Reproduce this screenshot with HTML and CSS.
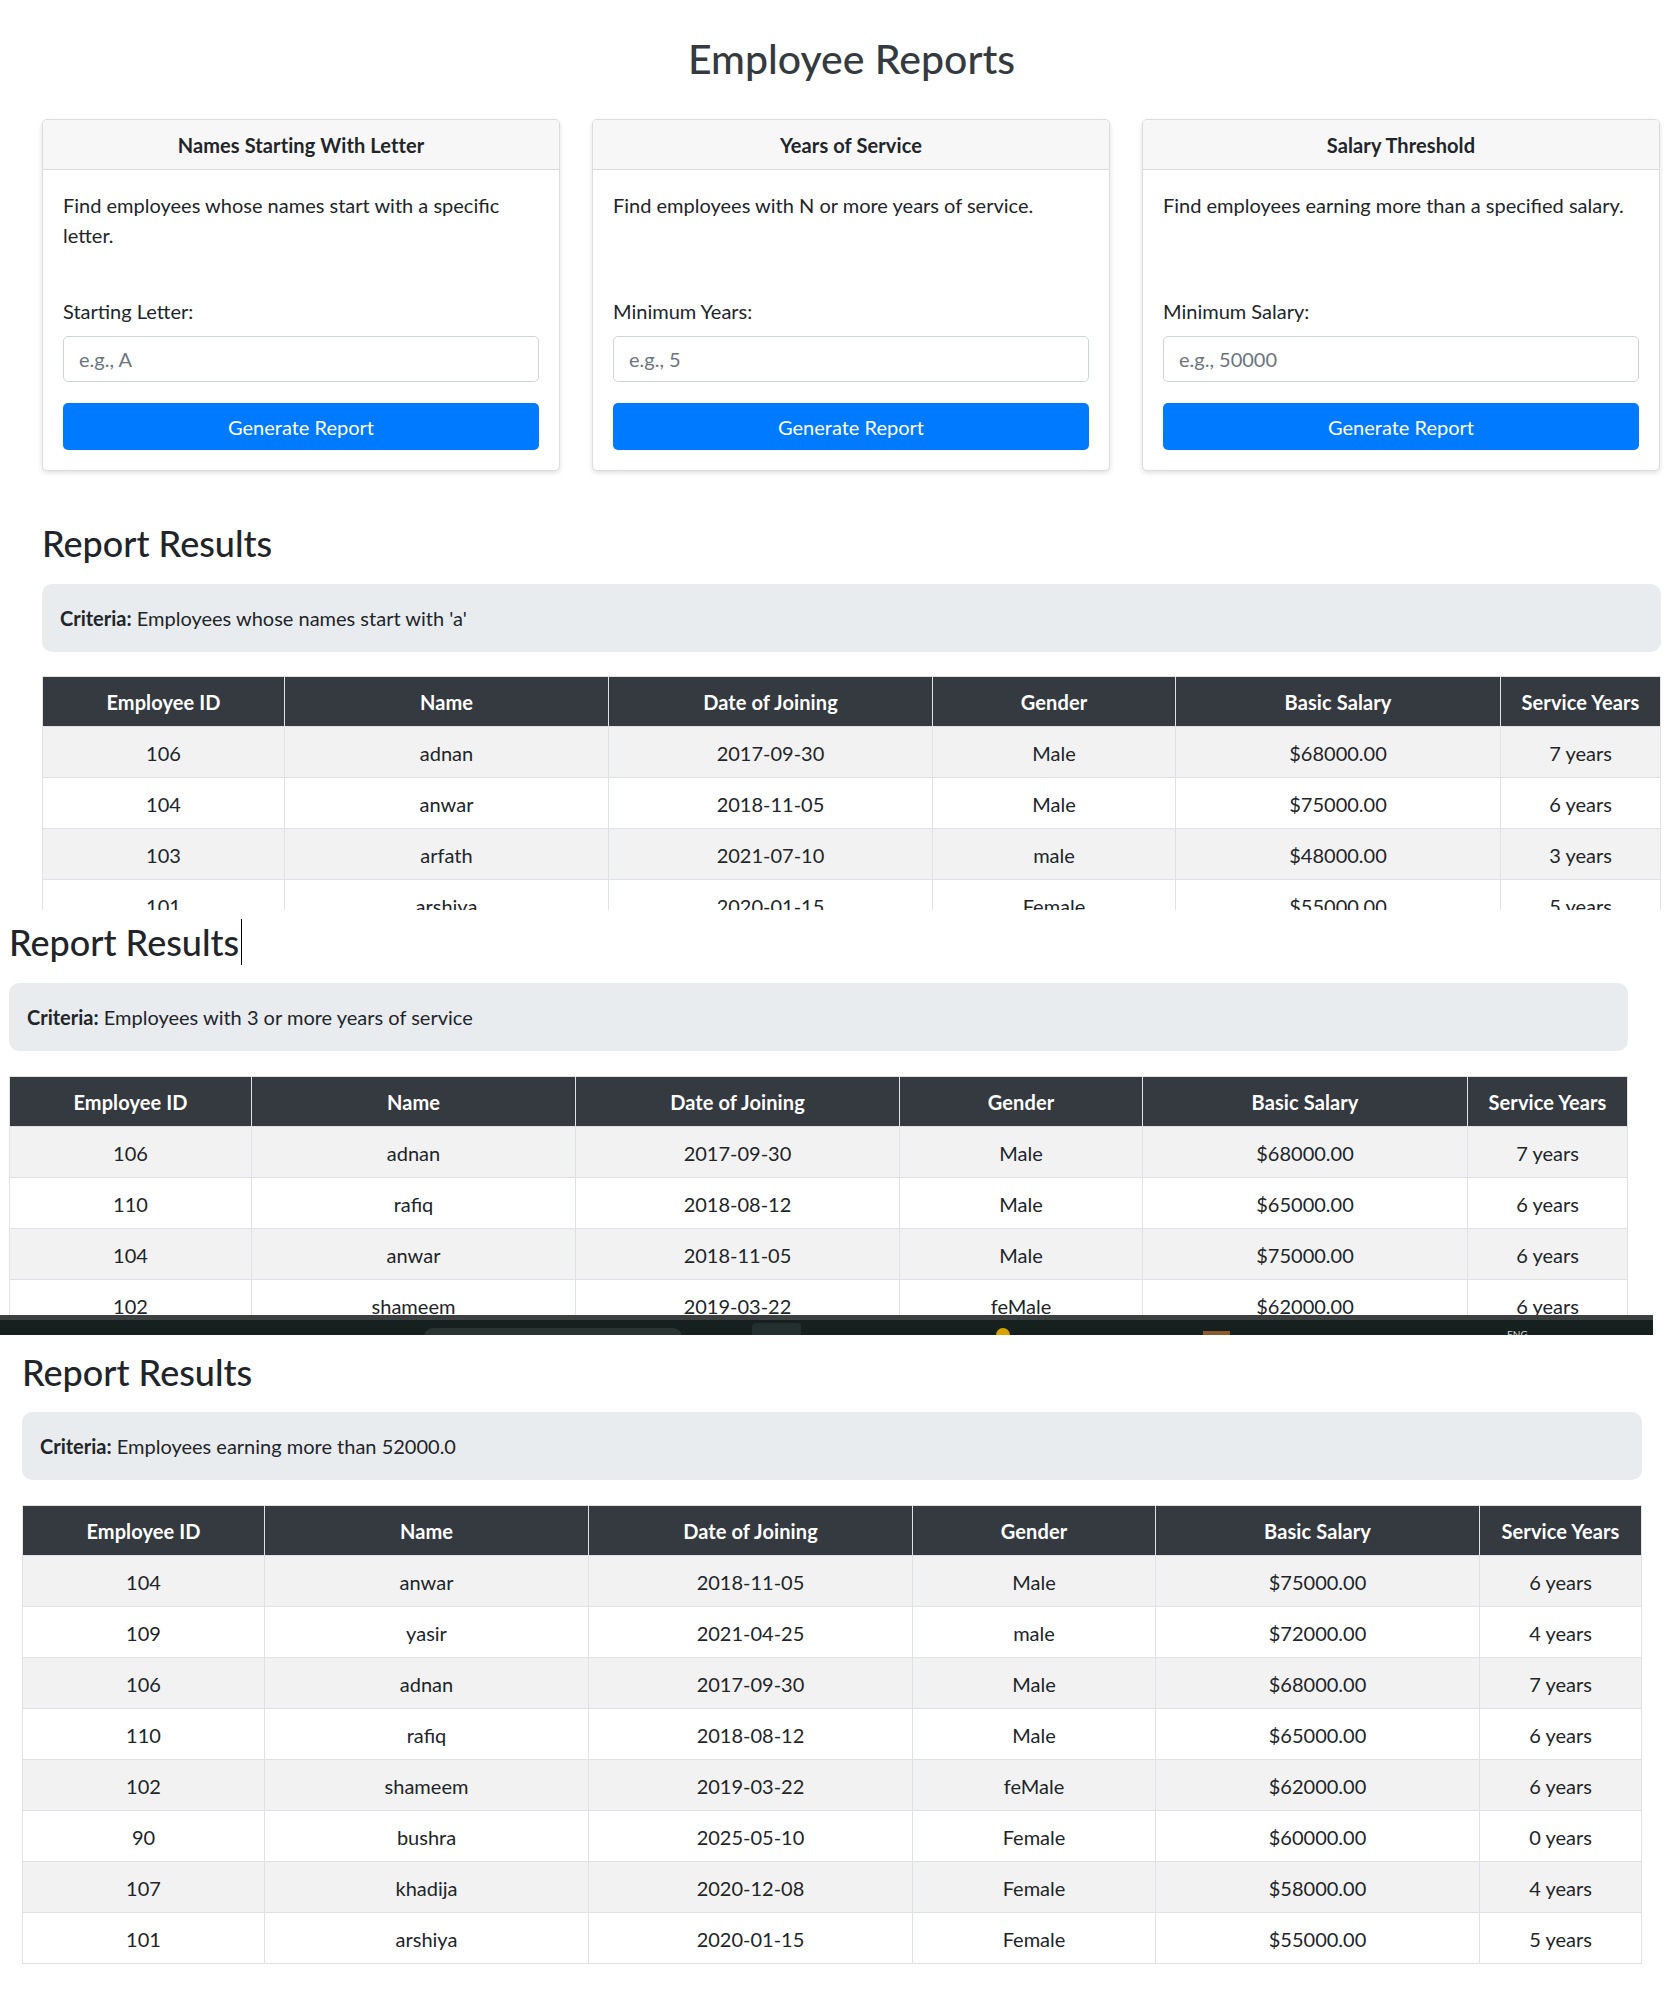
FILE: index.html
```html
<!DOCTYPE html>
<html lang="en">
<head>
<meta charset="utf-8">
<title>Employee Reports</title>
<link rel="stylesheet" href="styles.css">
</head>
<body>

<section class="shot shot-1">
  <div class="wrap">
    <h1 class="page-title">Employee Reports</h1>
    <div class="cards">
      <div class="card">
        <div class="card-header">Names Starting With Letter</div>
        <div class="card-body">
          <p class="desc">Find employees whose names start with a specific letter.</p>
          <label class="label">Starting Letter:</label>
          <div class="input"><span class="ph">e.g., A</span></div>
          <div class="btn">Generate Report</div>
        </div>
      </div>
      <div class="card">
        <div class="card-header">Years of Service</div>
        <div class="card-body">
          <p class="desc">Find employees with N or more years of service.</p>
          <label class="label">Minimum Years:</label>
          <div class="input"><span class="ph">e.g., 5</span></div>
          <div class="btn">Generate Report</div>
        </div>
      </div>
      <div class="card">
        <div class="card-header">Salary Threshold</div>
        <div class="card-body">
          <p class="desc">Find employees earning more than a specified salary.</p>
          <label class="label">Minimum Salary:</label>
          <div class="input"><span class="ph">e.g., 50000</span></div>
          <div class="btn">Generate Report</div>
        </div>
      </div>
    </div>

    <h3 class="results-title first">Report Results</h3>
    <div class="criteria crit-first"><b>Criteria:</b> Employees whose names start with 'a'</div>
    <table class="tbl tbl-first">
      <colgroup><col style="width:242px"><col style="width:324px"><col style="width:324px"><col style="width:243px"><col style="width:325px"><col></colgroup>
      <thead><tr><th>Employee ID</th><th>Name</th><th>Date of Joining</th><th>Gender</th><th>Basic Salary</th><th>Service Years</th></tr></thead>
      <tbody>
        <tr><td>106</td><td>adnan</td><td>2017-09-30</td><td>Male</td><td>$68000.00</td><td>7 years</td></tr>
        <tr><td>104</td><td>anwar</td><td>2018-11-05</td><td>Male</td><td>$75000.00</td><td>6 years</td></tr>
        <tr><td>103</td><td>arfath</td><td>2021-07-10</td><td>male</td><td>$48000.00</td><td>3 years</td></tr>
        <tr><td>101</td><td>arshiya</td><td>2020-01-15</td><td>Female</td><td>$55000.00</td><td>5 years</td></tr>
      </tbody>
    </table>
  </div>
</section>

<section class="shot shot-2">
  <div class="wrap">
    <h3 class="results-title second">Report Results<span class="caret"></span></h3>
    <div class="criteria"><b>Criteria:</b> Employees with 3 or more years of service</div>
    <table class="tbl">
      <colgroup><col style="width:242px"><col style="width:324px"><col style="width:324px"><col style="width:243px"><col style="width:325px"><col></colgroup>
      <thead><tr><th>Employee ID</th><th>Name</th><th>Date of Joining</th><th>Gender</th><th>Basic Salary</th><th>Service Years</th></tr></thead>
      <tbody>
        <tr><td>106</td><td>adnan</td><td>2017-09-30</td><td>Male</td><td>$68000.00</td><td>7 years</td></tr>
        <tr><td>110</td><td>rafiq</td><td>2018-08-12</td><td>Male</td><td>$65000.00</td><td>6 years</td></tr>
        <tr><td>104</td><td>anwar</td><td>2018-11-05</td><td>Male</td><td>$75000.00</td><td>6 years</td></tr>
        <tr><td>102</td><td>shameem</td><td>2019-03-22</td><td>feMale</td><td>$62000.00</td><td>6 years</td></tr>
      </tbody>
    </table>
  </div>
</section>

<div class="taskbar">
  <div class="tb-search"></div>
  <div class="tb-icon"></div>
  <div class="tb-dot"></div>
  <div class="tb-orange"></div>
  <div class="tb-text">ENG</div>
</div>

<section class="shot shot-3">
  <div class="wrap">
    <h3 class="results-title third">Report Results</h3>
    <div class="criteria crit-third"><b>Criteria:</b> Employees earning more than 52000.0</div>
    <table class="tbl">
      <colgroup><col style="width:242px"><col style="width:324px"><col style="width:324px"><col style="width:243px"><col style="width:324px"><col></colgroup>
      <thead><tr><th>Employee ID</th><th>Name</th><th>Date of Joining</th><th>Gender</th><th>Basic Salary</th><th>Service Years</th></tr></thead>
      <tbody>
        <tr><td>104</td><td>anwar</td><td>2018-11-05</td><td>Male</td><td>$75000.00</td><td>6 years</td></tr>
        <tr><td>109</td><td>yasir</td><td>2021-04-25</td><td>male</td><td>$72000.00</td><td>4 years</td></tr>
        <tr><td>106</td><td>adnan</td><td>2017-09-30</td><td>Male</td><td>$68000.00</td><td>7 years</td></tr>
        <tr><td>110</td><td>rafiq</td><td>2018-08-12</td><td>Male</td><td>$65000.00</td><td>6 years</td></tr>
        <tr><td>102</td><td>shameem</td><td>2019-03-22</td><td>feMale</td><td>$62000.00</td><td>6 years</td></tr>
        <tr><td>90</td><td>bushra</td><td>2025-05-10</td><td>Female</td><td>$60000.00</td><td>0 years</td></tr>
        <tr><td>107</td><td>khadija</td><td>2020-12-08</td><td>Female</td><td>$58000.00</td><td>4 years</td></tr>
        <tr><td>101</td><td>arshiya</td><td>2020-01-15</td><td>Female</td><td>$55000.00</td><td>5 years</td></tr>
      </tbody>
    </table>
  </div>
</section>

</body>
</html>
```

FILE: styles.css
```css
* { box-sizing: border-box; }

html, body {
  margin: 0;
  padding: 0;
  background: #fff;
}

body {
  font-family: Lato, "Noto Sans", "Liberation Sans", sans-serif;
  font-size: 20px;
  line-height: 30px;
  color: #212529;
}

.shot {
  overflow: hidden;
  position: relative;
}

.shot-1 { height: 910px; }
.shot-1 .wrap { margin-left: 42px; width: 1619px; }

.shot-2 { height: 405px; }
.shot-2 .wrap { margin-left: 9px; width: 1619px; }

.shot-3 { height: 668px; }
.shot-3 .wrap { margin-left: 22px; width: 1620px; }

.page-title {
  margin: 0;
  padding-top: 35px;
  font-size: 41px;
  line-height: 48px;
  font-weight: 500;
  text-align: center;
  color: #343a40;
}

.cards {
  margin-top: 36px;
  display: grid;
  grid-template-columns: 518px 518px 518px;
  column-gap: 32px;
}

.card {
  border: 1px solid #dcdcdc;
  border-radius: 5px;
  background: #fff;
  box-shadow: 0 2px 5px rgba(0, 0, 0, 0.12);
  overflow: hidden;
}

.card-header {
  background: #f7f7f7;
  border-bottom: 1px solid #d9d9d9;
  padding: 10px 20px 9px;
  font-weight: 700;
  letter-spacing: 0.1px;
  text-align: center;
}

.card-body {
  padding: 20px 20px 20px;
}

.desc {
  margin: 0 0 20px;
  min-height: 86px;
}

.label {
  display: block;
  margin-bottom: 10px;
}

.input {
  height: 46px;
  border: 1px solid #ced4da;
  border-radius: 5px;
  padding: 0 15px;
  display: flex;
  align-items: center;
}

.ph { color: #6c757d; }

.btn {
  margin-top: 21px;
  height: 47px;
  border-radius: 5px;
  background: #007bff;
  color: #fff;
  display: flex;
  align-items: center;
  justify-content: center;
}

.results-title {
  margin: 0;
  font-size: 36px;
  line-height: 42px;
  font-weight: 500;
  color: #212529;
}
.results-title.first { margin-top: 51px; }
.results-title.second { padding-top: 9px; }
.results-title.third { padding-top: 16px; }

.caret {
  display: inline-block;
  width: 1px;
  height: 46px;
  background: #000;
  vertical-align: -9px;
  margin-left: 2px;
}

.criteria {
  margin-top: 18px;
  background: #e9ecef;
  border-radius: 10px;
  padding: 19px 18px;
}
.criteria.crit-first { margin-top: 20px; }
.criteria.crit-third { margin-top: 19px; }

.tbl {
  margin-top: 25px;
  width: 100%;
  border-collapse: collapse;
  table-layout: fixed;
  text-align: center;
}
.tbl.tbl-first { margin-top: 24px; }

.tbl th,
.tbl td {
  border: 1px solid #dee2e6;
  padding: 11px 4px 9px;
  line-height: 30px;
  white-space: nowrap;
}

.tbl th {
  background: #343a40;
  color: #fff;
  font-weight: 700;
  letter-spacing: 0.1px;
  padding-top: 10px;
  padding-bottom: 9px;
}

.tbl tbody tr:nth-child(odd) td { background: #f2f2f2; }

.taskbar {
  height: 20px;
  width: 1653px;
  background: #15201f;
  border-top: 5px solid #3d4040;
  display: flex;
  align-items: flex-start;
  overflow: hidden;
}

.tb-search {
  margin-left: 424px;
  margin-top: 8px;
  width: 258px;
  height: 20px;
  border-radius: 9px 9px 0 0;
  background: #2a3533;
}

.tb-icon {
  margin-left: 70px;
  margin-top: 3px;
  width: 49px;
  height: 20px;
  border-radius: 4px;
  background: #243030;
}

.tb-dot {
  margin-left: 195px;
  margin-top: 8px;
  width: 14px;
  height: 14px;
  border-radius: 50%;
  background: #d6a300;
}

.tb-orange {
  margin-left: 193px;
  margin-top: 11px;
  width: 27px;
  height: 10px;
  background: #8c5a2b;
}

.tb-text {
  margin-left: 277px;
  margin-top: 8px;
  font-size: 10px;
  line-height: 12px;
  color: #d8d8d8;
}
```
